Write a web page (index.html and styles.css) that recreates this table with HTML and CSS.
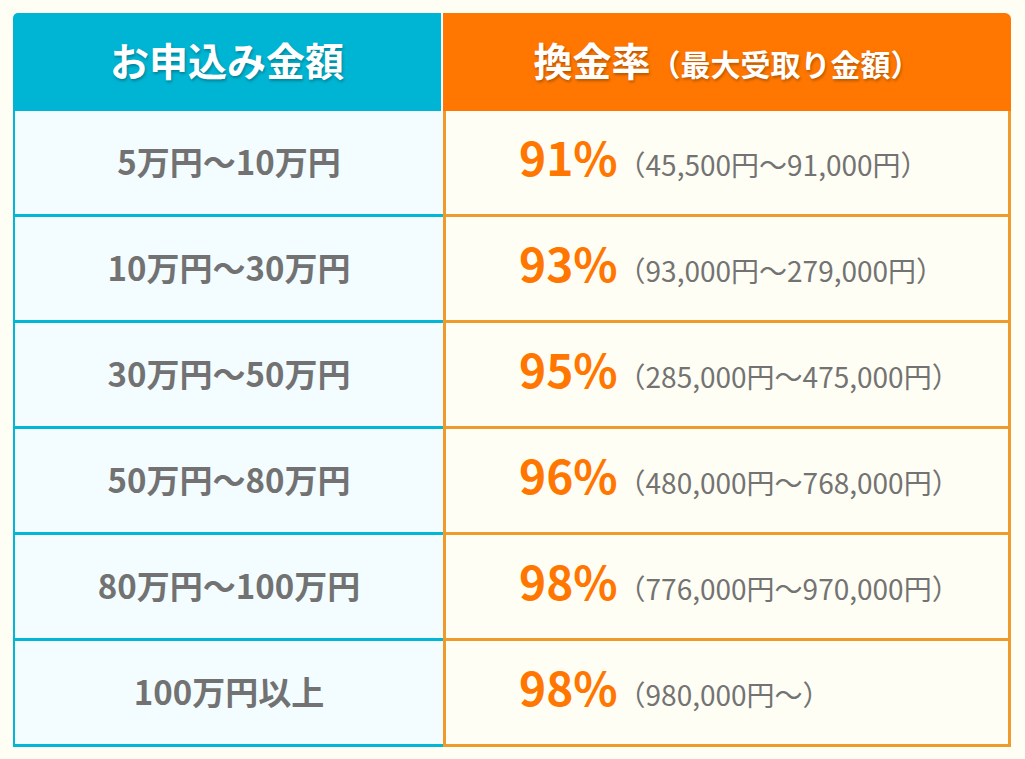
FILE: index.html
```html
<!DOCTYPE html>
<html lang="ja">
<head>
<meta charset="utf-8">
<title>換金率表</title>
<link rel="stylesheet" href="styles.css">
</head>
<body>
<div class="page">
  <table class="rate-table">
    <thead>
      <tr>
        <th class="head head-amount">お申込み金額</th>
        <th class="head head-rate">換金率<span class="head-sub">（最大受取り金額）</span></th>
      </tr>
    </thead>
    <tbody>
      <tr>
        <td class="amount">5万円～10万円</td>
        <td class="rate"><span class="pct">91%</span><span class="range">（45,500円～91,000円）</span></td>
      </tr>
      <tr>
        <td class="amount">10万円～30万円</td>
        <td class="rate"><span class="pct">93%</span><span class="range">（93,000円～279,000円）</span></td>
      </tr>
      <tr>
        <td class="amount">30万円～50万円</td>
        <td class="rate"><span class="pct">95%</span><span class="range">（285,000円～475,000円）</span></td>
      </tr>
      <tr>
        <td class="amount">50万円～80万円</td>
        <td class="rate"><span class="pct">96%</span><span class="range">（480,000円～768,000円）</span></td>
      </tr>
      <tr>
        <td class="amount">80万円～100万円</td>
        <td class="rate"><span class="pct">98%</span><span class="range">（776,000円～970,000円）</span></td>
      </tr>
      <tr>
        <td class="amount">100万円以上</td>
        <td class="rate"><span class="pct">98%</span><span class="range">（980,000円～）</span></td>
      </tr>
    </tbody>
  </table>
</div>
</body>
</html>
```

FILE: styles.css
```css
html, body {
  margin: 0;
  padding: 0;
  background: #fffef4;
}

body {
  font-family: "Noto Sans CJK JP", "Noto Sans", sans-serif;
  color: #707070;
}

.page {
  padding: 13px 14px 13px 13px;
}

.rate-table {
  width: 998px;
  border-collapse: separate;
  border-spacing: 0;
  table-layout: fixed;
}

.head {
  height: 93px;
  padding: 0 0 5px;
  color: #ffffff;
  font-weight: 700;
  font-size: 39px;
  line-height: 1;
  text-align: center;
  vertical-align: middle;
  text-shadow: 1px 2px 3px rgba(0, 0, 0, 0.28);
}

.head-amount {
  width: 428px;
  background: #00b5d3;
  border-top-left-radius: 5px;
  border-right: 2px solid #f4fdff;
}

.head-rate {
  background: #ff7700;
  border-top-right-radius: 6px;
}

.head-sub {
  font-size: 30px;
}

.amount,
.rate {
  vertical-align: middle;
}

.amount {
  height: 99px;
  padding: 0 0 4px;
  background: #f3fdff;
  border-left: 2px solid #00b8d6;
  border-bottom: 3px solid #00b8d6;
  text-align: center;
  font-weight: 700;
  font-size: 33px;
  color: #727272;
}

.rate {
  height: 91px;
  padding: 0 0 12px 73px;
  background: #fffef4;
  border-left: 3px solid #ef9b2b;
  border-right: 3px solid #ef9b2b;
  border-bottom: 3px solid #ef9b2b;
  text-align: left;
  white-space: nowrap;
}

.pct {
  color: #ff7700;
  font-weight: 700;
  font-size: 46px;
  line-height: 1;
}

.range {
  font-size: 28px;
  font-weight: 400;
  color: #737373;
  line-height: 1;
}
```
